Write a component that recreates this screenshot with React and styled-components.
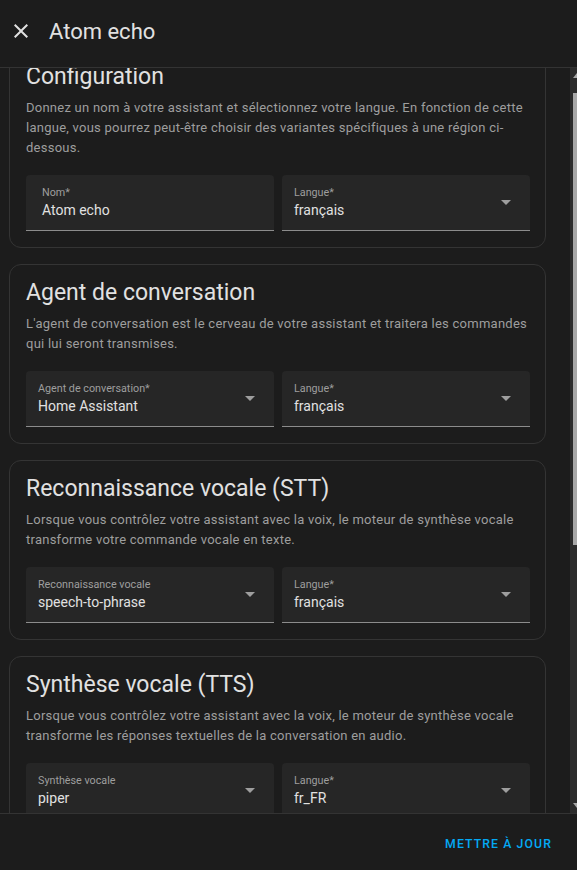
import React, { useLayoutEffect, useRef } from "react";
import styled, { createGlobalStyle } from "styled-components";

const GlobalStyle = createGlobalStyle`
  html, body {
    margin: 0;
    padding: 0;
    background: #1c1c1c;
  }
  body {
    font-family: Roboto, "Noto Sans", sans-serif;
    color: #e1e1e1;
  }
  * {
    box-sizing: border-box;
  }
`;

const Dialog = styled.div`
  display: flex;
  flex-direction: column;
  height: 100vh;
  background: #1c1c1c;
`;

const Header = styled.header`
  flex: none;
  height: 68px;
  padding-bottom: 5px;
  display: flex;
  align-items: center;
  border-bottom: 1px solid #333333;
`;

const CloseButton = styled.button`
  width: 24px;
  height: 24px;
  margin-left: 9px;
  padding: 0;
  border: none;
  background: none;
  color: #e1e1e1;
  display: flex;
  cursor: pointer;
`;

const Title = styled.h1`
  margin: 0 0 0 16px;
  font-size: 22px;
  font-weight: 400;
  color: #e1e1e1;
`;

const Body = styled.div`
  flex: 1;
  min-height: 0;
  display: flex;
`;

const Scroller = styled.div`
  flex: 1;
  overflow-y: scroll;
  scrollbar-width: none;

  &::-webkit-scrollbar {
    display: none;
  }
`;

/* the page's own scrollbar, drawn as a thin rail on the right */
const Rail = styled.div`
  flex: none;
  width: 7px;
  display: flex;
  flex-direction: column;
  background: #2c2c2c;
`;

const RailArrow = styled.svg`
  flex: none;
  width: 7px;
  height: 14px;
  fill: #a8a8a8;
`;

const Thumb = styled.div`
  flex: none;
  margin: 11px 0 0 3px;
  height: 452px;
  background: #a8a8a8;
`;

const RailSpacer = styled.div`
  flex: 1;
`;

const Content = styled.div`
  display: flex;
  flex-direction: column;
  gap: 16px;
  padding: 0 24px 200px 9px;
`;

const Card = styled.section`
  border: 1px solid #343434;
  border-radius: 12px;
  padding: 12px 15px 16px 16px;
  background: #1c1c1c;
`;

const CardTitle = styled.h2`
  margin: 0;
  font-size: 23px;
  line-height: 32px;
  font-weight: 400;
  color: #e1e1e1;
`;

const Description = styled.p`
  margin: 5px 0 17px;
  font-size: 13px;
  line-height: 20px;
  letter-spacing: 0.25px;
  color: #9e9e9e;
`;

const FieldRow = styled.div`
  display: grid;
  grid-template-columns: 1fr 1fr;
  gap: 8px;

  & + & {
    margin-top: 8px;
  }
`;

const Field = styled.div`
  height: 56px;
  display: flex;
  align-items: center;
  padding: 0 12px 0 ${(p) => (p.$select ? "12px" : "16px")};
  background: #262626;
  border-radius: 4px 4px 0 0;
  border-bottom: 1px solid #8c8c8c;
`;

const FieldText = styled.div`
  flex: 1;
  min-width: 0;
  align-self: flex-start;
  padding-top: 11px;
  display: flex;
  flex-direction: column;
`;

const Label = styled.span`
  font-size: 10.75px;
  line-height: 14px;
  color: #9e9e9e;
  white-space: nowrap;
`;

const Value = styled.span`
  font-size: 14px;
  line-height: 20px;
  color: #e1e1e1;
  white-space: nowrap;
`;

const Arrow = styled.svg`
  flex: none;
  width: 24px;
  height: 24px;
  margin-top: -1px;
  fill: #9e9e9e;
`;

const Footer = styled.footer`
  flex: none;
  height: 57px;
  padding: 4px 17px 0 0;
  display: flex;
  align-items: center;
  justify-content: flex-end;
  border-top: 1px solid #333333;
`;

const TextButton = styled.button`
  height: 36px;
  padding: 0 8px;
  border: none;
  background: none;
  color: #03a9f4;
  font-family: Roboto, "Noto Sans", sans-serif;
  font-size: 12.25px;
  font-weight: 500;
  letter-spacing: 1.1px;
  text-transform: uppercase;
  cursor: pointer;
`;

function FormField({ label, value, select }) {
  return (
    <Field $select={select}>
      <FieldText>
        <Label>{label}</Label>
        <Value>{value}</Value>
      </FieldText>
      {select && (
        <Arrow viewBox="0 0 24 24">
          <path d="M7,10L12,15L17,10H7Z" />
        </Arrow>
      )}
    </Field>
  );
}

const sections = [
  {
    title: "Configuration",
    text: "Donnez un nom à votre assistant et sélectionnez votre langue. En fonction de cette langue, vous pourrez peut-être choisir des variantes spécifiques à une région ci-dessous.",
    rows: [
      [
        { label: "Nom*", value: "Atom echo" },
        { label: "Langue*", value: "français", select: true },
      ],
    ],
  },
  {
    title: "Agent de conversation",
    text: "L'agent de conversation est le cerveau de votre assistant et traitera les commandes qui lui seront transmises.",
    rows: [
      [
        { label: "Agent de conversation*", value: "Home Assistant", select: true },
        { label: "Langue*", value: "français", select: true },
      ],
    ],
  },
  {
    title: "Reconnaissance vocale (STT)",
    text: "Lorsque vous contrôlez votre assistant avec la voix, le moteur de synthèse vocale transforme votre commande vocale en texte.",
    rows: [
      [
        { label: "Reconnaissance vocale", value: "speech-to-phrase", select: true },
        { label: "Langue*", value: "français", select: true },
      ],
    ],
  },
  {
    title: "Synthèse vocale (TTS)",
    text: "Lorsque vous contrôlez votre assistant avec la voix, le moteur de synthèse vocale transforme les réponses textuelles de la conversation en audio.",
    rows: [
      [
        { label: "Synthèse vocale", value: "piper", select: true },
        { label: "Langue*", value: "fr_FR", select: true },
      ],
      [{ label: "Voix", value: "siwis (medium)", select: true }],
    ],
  },
];

export default function App() {
  const scrollRef = useRef(null);

  useLayoutEffect(() => {
    if (scrollRef.current) scrollRef.current.scrollTop = 20;
  }, []);

  return (
    <>
      <GlobalStyle />
      <Dialog>
        <Header>
          <CloseButton aria-label="Fermer">
            <svg viewBox="0 0 24 24" width="24" height="24" fill="currentColor">
              <path d="M19,6.41L17.59,5L12,10.59L6.41,5L5,6.41L10.59,12L5,17.59L6.41,19L12,13.41L17.59,19L19,17.59L13.41,12L19,6.41Z" />
            </svg>
          </CloseButton>
          <Title>Atom echo</Title>
        </Header>

        <Body>
          <Scroller ref={scrollRef}>
            <Content>
              {sections.map((s) => (
                <Card key={s.title}>
                  <CardTitle>{s.title}</CardTitle>
                  <Description>{s.text}</Description>
                  {s.rows.map((row, i) => (
                    <FieldRow key={i}>
                      {row.map((f) => (
                        <FormField key={f.label} {...f} />
                      ))}
                    </FieldRow>
                  ))}
                </Card>
              ))}
            </Content>
          </Scroller>
          <Rail>
            <RailArrow viewBox="0 0 7 14">
              <polygon points="7,5 3,10 7,10" />
            </RailArrow>
            <Thumb />
            <RailSpacer />
            <RailArrow viewBox="0 0 7 14">
              <polygon points="3,4 7,4 7,9" />
            </RailArrow>
          </Rail>
        </Body>

        <Footer>
          <TextButton>Mettre à jour</TextButton>
        </Footer>
      </Dialog>
    </>
  );
}
